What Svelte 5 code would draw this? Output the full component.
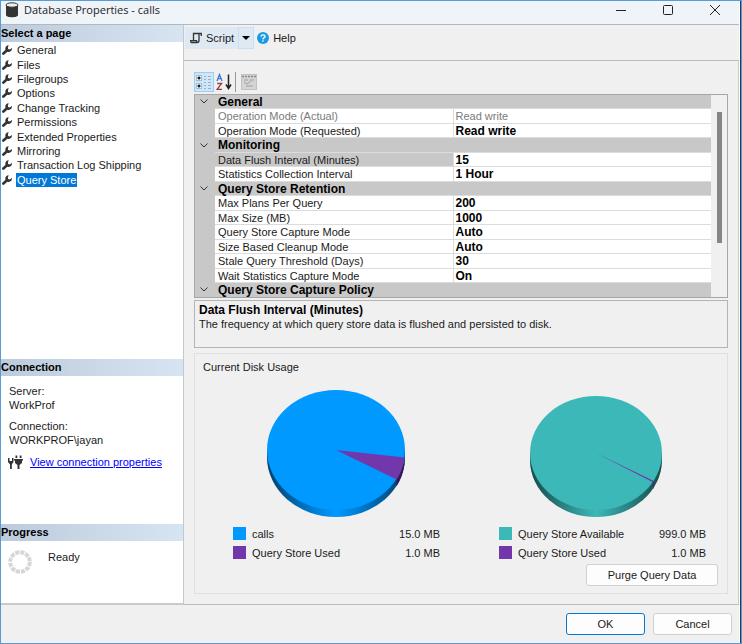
<script>
  const pages = ['General', 'Files', 'Filegroups', 'Options', 'Change Tracking', 'Permissions', 'Extended Properties', 'Mirroring', 'Transaction Log Shipping', 'Query Store'];
  let page = $state('Query Store');

  const rows = [
    { group: 'General' },
    { name: 'Operation Mode (Actual)', value: 'Read write', readonly: true },
    { name: 'Operation Mode (Requested)', value: 'Read write' },
    { group: 'Monitoring' },
    { name: 'Data Flush Interval (Minutes)', value: '15', selected: true },
    { name: 'Statistics Collection Interval', value: '1 Hour' },
    { group: 'Query Store Retention' },
    { name: 'Max Plans Per Query', value: '200' },
    { name: 'Max Size (MB)', value: '1000' },
    { name: 'Query Store Capture Mode', value: 'Auto' },
    { name: 'Size Based Cleanup Mode', value: 'Auto' },
    { name: 'Stale Query Threshold (Days)', value: '30' },
    { name: 'Wait Statistics Capture Mode', value: 'On' },
    { group: 'Query Store Capture Policy' }
  ];

  const charts = [
    {
      id: 'db', cx: 103, cy: 64, rx: 69, ry: 60, color: '#0099ff', dark: '#003f6b', mid: '#0068b0',
      wedge: 'M103 64 L171.5 71.5 A69 60 0 0 1 163.5 93.5 Z',
      side: 'M171.5 71.5 A69 60 0 0 1 163.5 93.5 V100.500 A69 60 0 0 0 171.5 78.5 Z',
      items: [['calls', '15.0 MB', '#0099ff'], ['Query Store Used', '1.0 MB', '#7337ac']]
    },
    {
      id: 'qs', cx: 97, cy: 67, rx: 66, ry: 57, color: '#3db8b8', dark: '#174a4a', mid: '#287a7a',
      wedge: 'M97 67 L154.800 95 L154 96.300 Z',
      side: 'M154.800 95.200 L154.300 96 V103 L154.800 102.200 Z',
      items: [['Query Store Available', '999.0 MB', '#3db8b8'], ['Query Store Used', '1.0 MB', '#7337ac']]
    }
  ];
</script>

{#snippet wrench()}
  <svg class="wrench" viewBox="0 0 10 10" aria-hidden="true">
    <path d="M1.400 8.500 L5 5.200" stroke="#333" stroke-width="2.600" stroke-linecap="round" />
    <path d="M6.700 .3 A3.200 3.200 0 0 0 3.400 4.300 A3 3 0 0 0 6.600 6.900 A3.200 3.200 0 0 0 9.900 3 L7.800 4.600 L6.100 4.100 L5.900 2.300 Z" fill="#333" />
  </svg>
{/snippet}

<div class="window">
  <header class="titlebar">
    <svg width="14" height="16" viewBox="0 0 14 16" aria-hidden="true">
      <path d="M1 3 V13 C1 16 13 16 13 13 V3 Z" fill="#333" />
      <ellipse cx="7" cy="3" rx="6" ry="2.200" fill="#eee" stroke="#333" />
    </svg>
    <h1>Database Properties - calls</h1>
    <div class="controls">
      <button aria-label="Minimize"><svg width="12" height="12" viewBox="0 0 12 12"><path d="M1 6.500 H11" /></svg></button>
      <button aria-label="Maximize"><svg width="12" height="12" viewBox="0 0 12 12"><rect x="1.500" y="1.500" width="9" height="9" rx="1" /></svg></button>
      <button aria-label="Close"><svg width="12" height="12" viewBox="0 0 12 12"><path d="M1 1 L11 11 M11 1 L1 11" /></svg></button>
    </div>
  </header>

  <div class="body">
    <aside>
      <section class="pages">
        <h2>Select a page</h2>
        <ul>
          {#each pages as p}
            <li>
              {@render wrench()}
              <a href="#page" class:current={p === page} onclick={() => (page = p)}>{p}</a>
            </li>
          {/each}
        </ul>
      </section>
      <section class="connection">
        <h2>Connection</h2>
        <dl>
          <dt>Server:</dt>
          <dd>WorkProf</dd>
          <dt>Connection:</dt>
          <dd>WORKPROF\jayan</dd>
        </dl>
        <div class="view">
          <svg width="15" height="14" viewBox="0 0 15 14" aria-hidden="true">
            <g fill="#333">
              <path d="M0 3 H1.500 V6 H4 V3 H5.500 V7 L3.800 9.500 V14 H2 V9.500 L0 7 Z" />
              <path d="M6 4 H15 V5.500 H14 V8 L11.500 10 V14 H9.500 V10 L7 8 V5.500 H6 Z M7.500 .5 H9.300 V3 H7.500 Z M11.700 .5 H13.500 V3 H11.700 Z" />
            </g>
          </svg>
          <a href="#connection">View connection properties</a>
        </div>
      </section>
      <section class="progress">
        <h2>Progress</h2>
        <div class="status">
          <svg width="24" height="24" viewBox="0 0 24 24" aria-hidden="true">
            <circle cx="12" cy="12" r="9.800" fill="none" stroke="#d6d6d6" stroke-width="4" stroke-dasharray="4.100 1.031" />
          </svg>
          <span>Ready</span>
        </div>
      </section>
    </aside>

    <main>
      <div class="toolbar">
        <button class="script">
          <svg width="12" height="12" viewBox="0 0 12 12" aria-hidden="true">
            <path d="M3.500 9 V1.500 H11.300 V4 M9 2 V8.500 Q9 10.500 7 10.500 H1.500 Q.7 10.500 .7 8.700 H6.500 Q6.500 10.500 7.500 10.500" fill="none" stroke="#333" stroke-width="1.300" />
          </svg>
          Script
        </button>
        <button class="arrow" aria-label="Script options"><svg width="8" height="4" viewBox="0 0 8 4"><path d="M0 0 H8 L4 4 Z" /></svg></button>
        <button class="help">
          <svg width="12" height="12" viewBox="0 0 12 12" aria-hidden="true">
            <circle cx="6" cy="6" r="6" fill="#1a9be0" />
            <path d="M4 4.600 Q4.100 2.800 6 2.800 Q8 2.800 8 4.400 Q8 5.300 6.900 5.900 Q6 6.400 6 7.400" fill="none" stroke="#fff" stroke-width="1.300" />
            <rect x="5.300" y="8.300" width="1.400" height="1.400" fill="#fff" />
          </svg>
          Help
        </button>
      </div>

      <div class="content">
        <div class="gridbar">
          <button class="on" aria-label="Categorized">
            <svg width="16" height="16" viewBox="0 0 16 16">
              <g fill="#fff" stroke="#a8bccd"><rect x=".5" y="1.500" width="5" height="5" /><rect x=".5" y="9.500" width="5" height="5" /></g>
              <path d="M3 2.500 V5.500 M1.500 4 H4.500 M3 10.500 V13.500 M1.500 12 H4.500" stroke="#111" stroke-width="1.500" />
              <path d="M8 2.500 H10 M8 5.500 H10 M8 8.500 H10 M8 11.500 H10 M8 14.500 H10 M12 2.500 H15 M12 5.500 H15 M12 8.500 H15 M12 11.500 H15 M12 14.500 H15" stroke="#a5aeb5" />
            </svg>
          </button>
          <button aria-label="Alphabetical">
            <svg width="16" height="18" viewBox="0 0 16 18">
              <path d="M1 8 L3.500 1.500 L6 8 M2 5.700 H5" fill="none" stroke="#3b78cf" stroke-width="1.300" />
              <path d="M1.200 10.500 H5.600 L1.200 16.300 H6" fill="none" stroke="#96404a" stroke-width="1.300" />
              <path d="M12.500 1.500 V15 M10 11.500 L12.500 15.500 L15 11.500" fill="none" stroke="#222" stroke-width="1.500" />
            </svg>
          </button>
          <span class="sep"></span>
          <button aria-label="Property pages" disabled>
            <svg width="16" height="16" viewBox="0 0 16 16">
              <rect x=".5" y=".5" width="15" height="15" fill="#d4d4d4" stroke="#c2c2c2" />
              <path d="M1 2.500 H15" stroke="#888" stroke-width="1.500" stroke-dasharray="2 1" />
              <path d="M3 6 H7 M9 6 H13 M3 8 L6 10 L10 7 M5 12 H12" fill="none" stroke="#a0a0a0" />
            </svg>
          </button>
        </div>

        <div class="grid">
          <table>
            <colgroup><col class="gutter" /><col class="names" /><col /></colgroup>
            <tbody>
              {#each rows as r}
                {#if r.group}
                  <tr class="group">
                    <td><button aria-label="Collapse {r.group}"><svg width="8" height="5" viewBox="0 0 8 5"><path d="M.5 .5 L4 4 L7.500 .5" /></svg></button></td>
                    <th colspan="2" scope="rowgroup">{r.group}</th>
                  </tr>
                {:else}
                  <tr class:readonly={r.readonly} class:selected={r.selected}>
                    <td></td>
                    <th scope="row">{r.name}</th>
                    <td class="value">{r.value}</td>
                  </tr>
                {/if}
              {/each}
            </tbody>
          </table>
          <div class="scrollbar"><div class="thumb"></div></div>
        </div>

        <div class="description">
          <strong>Data Flush Interval (Minutes)</strong>
          <p>The frequency at which query store data is flushed and persisted to disk.</p>
        </div>

        <section class="usage">
          <h3>Current Disk Usage</h3>
          <div class="charts">
            {#each charts as c}
              <figure>
                <svg width="207" height="132" viewBox="0 0 207 132" role="img" aria-label={c.items[0][0]}>
                  <defs>
                    <linearGradient id={c.id}>
                      <stop offset="0" stop-color={c.dark} />
                      <stop offset=".22" stop-color={c.mid} />
                      <stop offset=".5" stop-color={c.color} />
                      <stop offset=".78" stop-color={c.mid} />
                      <stop offset="1" stop-color={c.dark} />
                    </linearGradient>
                  </defs>
                  <path d="M{c.cx - c.rx} {c.cy} v7 a{c.rx} {c.ry} 0 0 0 {2 * c.rx} 0 v-7 Z" fill="url(#{c.id})" />
                  <path d={c.side} fill="#3a1759" />
                  <ellipse cx={c.cx} cy={c.cy} rx={c.rx} ry={c.ry} fill={c.color} />
                  <path d={c.wedge} fill="#7337ac" />
                </svg>
                <figcaption>
                  {#each c.items as [label, size, color]}
                    <div class="legend"><i style="background:{color}"></i><span>{label}</span><b>{size}</b></div>
                  {/each}
                </figcaption>
              </figure>
            {/each}
          </div>
          <button class="push purge">Purge Query Data</button>
        </section>
      </div>
    </main>
  </div>

  <footer>
    <button class="push default">OK</button>
    <button class="push">Cancel</button>
  </footer>
</div>

<style>
  .window, .window * { box-sizing: border-box; }
  .window {
    min-height: 100vh;
    display: flex;
    flex-direction: column;
    border: 1px solid #5b9bd5;
    background: #f0f0f0;
    box-shadow: inset -1px 0 #263a56, inset -2px 0 #fff;
    font: 11px/14px "Liberation Sans", Arial, sans-serif;
    color: #1a1a1a;
  }
  h1, h2, h3, ul, dl, dd, p, figure { margin: 0; padding: 0; font-size: inherit; }
  button { font: inherit; color: inherit; padding: 0; border: 0; background: none; }
  svg { display: block; flex: none; }

  .titlebar {
    display: flex;
    align-items: center;
    height: 24px;
    padding: 0 18px 6px 4px;
    gap: 5px;
    background: #eff4f9;
    border-bottom: 1px solid #b4b8bc;
    margin-right: 2px;
  }
  h1 { flex: 1; font: 11px/16px "Open Sans", "Noto Sans", sans-serif; color: #222; }
  .controls { display: flex; gap: 35px; }
  .controls path, .controls rect { fill: none; stroke: #222; }

  .body { flex: 1; display: flex; margin-right: 2px; }
  aside {
    flex: none;
    width: 183px;
    display: flex;
    flex-direction: column;
    background: #fff;
    border-right: 1px solid #c4c7cc;
    border-bottom: 2px solid #c8cacd;
  }
  h2 {
    height: 17px;
    line-height: 17px;
    font-weight: bold;
    color: #000;
    background: linear-gradient(90deg, #bccbdc, #d7e4f2);
  }
  .pages { flex: 1; }
  ul { list-style: none; display: grid; grid-auto-rows: 1fr; height: 144px; margin-top: 1px; }
  li { display: flex; align-items: center; gap: 4px; padding-left: 1px; }
  .wrench { width: 10px; height: 10px; }
  li a { color: inherit; text-decoration: none; padding: 0 1px; }
  li a.current { background: #0078d7; color: #fff; }
  .connection { height: 165px; }
  dl { padding: 8px 8px 0; }
  dt:not(:first-child) { margin-top: 7px; }
  .view { display: flex; align-items: center; gap: 7px; padding: 8px 7px 0; }
  .view a { color: #0000ff; }
  .progress { height: 79px; }
  .status { display: flex; gap: 16px; padding: 9px 7px; }

  main { flex: 1; display: flex; flex-direction: column; border-bottom: 1px solid #b9bcc0; }
  .toolbar { height: 36px; display: flex; align-items: flex-start; padding: 2px 1px; border-bottom: 1px solid #b9bcc0; }
  .toolbar button { display: flex; align-items: center; height: 22px; }
  .script { gap: 4px; padding: 0 4px 0 5px; background: #dfe9f3; }
  .arrow { padding: 0 3px; background: #dfe9f3; border: 1px solid #cbdff2; }
  .help { gap: 4px; padding: 0 3px; }

  .content { flex: 1; padding: 11px 10px 10px; border-right: 1px solid #c8cacd; }
  .gridbar { display: flex; align-items: center; gap: 2px; height: 20px; margin-bottom: 2px; }
  .gridbar .on { padding: 1px; background: #cce6fb; border: 1px solid #99cff7; }
  .sep { width: 1px; height: 20px; margin: 0 3px 0 1px; background: #999; }
  .grid { display: flex; height: 204px; border: 1px solid #a6a6a6; overflow: hidden; }
  table { flex: 1; height: 202px; table-layout: fixed; border-collapse: collapse; background: #fff; }
  .gutter { width: 20px; }
  .names { width: 238px; }
  td, th { padding: 0; line-height: 12px; text-align: left; font-weight: normal; white-space: nowrap; font-size: 11px; }
  th { padding-left: 3px; }
  td:first-child, .group th { background: #c8c8c8; }
  tr:not(.group) th, .value { border: solid #dcdcdc; border-width: 1px 0; }
  tr .value { border-left: 1px solid #dcdcdc; padding-left: 2px; font-size: 12px; font-weight: bold; color: #000; }
  .group th { font-size: 12px; font-weight: bold; color: #000; }
  .group button { display: block; padding: 0 5px; }
  .group path { fill: none; stroke: #333; }
  .readonly th { color: #7a7a7a; }
  .readonly .value { color: #7a7a7a; font-size: 11px; font-weight: normal; }
  .selected th { background: #c8c8c8; }
  .scrollbar { width: 16px; padding: 17px 5px 0 6px; }
  .thumb { height: 131px; background: #858585; }

  .description { height: 48px; margin-top: 2px; padding: 2px 4px; border: 1px solid #b4b4b4; }
  .description strong { display: block; font-size: 12px; color: #000; }
  .usage { height: 241px; margin-top: 5px; padding: 5px 9px 7px 8px; border: 1px solid #dfdfdf; }
  h3 { font-weight: normal; line-height: 16px; }
  .charts { display: flex; justify-content: space-between; padding: 11px 12px 0 30px; }
  figcaption { padding-top: 6px; }
  .legend { display: flex; align-items: center; height: 19px; }
  .legend i { width: 13px; height: 13px; margin-right: 6px; }
  .legend span { flex: 1; }
  .legend b { font-weight: normal; }
  .push { height: 22px; background: #fdfdfd; border: 1px solid #d0d0d0; border-radius: 3px; }
  .purge { display: block; width: 132px; margin-left: auto; margin-top: 2px; }

  footer { display: flex; justify-content: flex-end; gap: 8px; padding: 8px 9px; height: 38px; }
  footer .push { width: 79px; }
  .default { border-color: #0078d7; }
</style>
